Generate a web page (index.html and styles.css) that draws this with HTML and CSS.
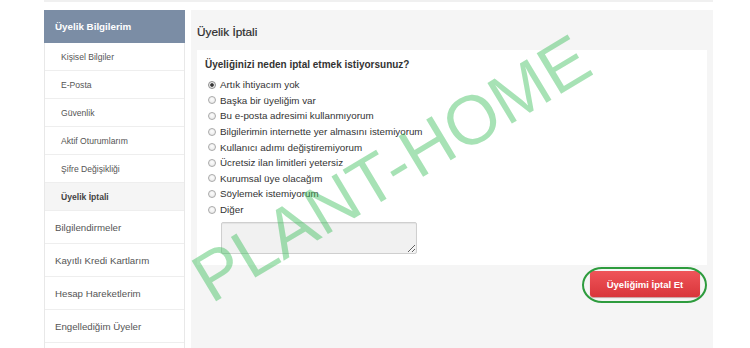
FILE: index.html
```html
<!DOCTYPE html>
<html lang="tr">
<head>
<meta charset="utf-8">
<title>Üyelik İptali</title>
<link rel="stylesheet" href="styles.css">
</head>
<body>
<div class="topline"></div>
<div class="layout">
  <nav class="sidebar">
    <div class="side-head">Üyelik Bilgilerim</div>
    <a class="sub">Kişisel Bilgiler</a>
    <a class="sub">E-Posta</a>
    <a class="sub">Güvenlik</a>
    <a class="sub">Aktif Oturumlarım</a>
    <a class="sub">Şifre Değişikliği</a>
    <a class="sub active">Üyelik İptali</a>
    <a class="main-item">Bilgilendirmeler</a>
    <a class="main-item">Kayıtlı Kredi Kartlarım</a>
    <a class="main-item">Hesap Hareketlerim</a>
    <a class="main-item">Engellediğim Üyeler</a>
    <a class="main-item"></a>
  </nav>
  <section class="panel">
    <h1 class="panel-title">Üyelik İptali</h1>
    <div class="card">
      <div class="question">Üyeliğinizi neden iptal etmek istiyorsunuz?</div>
      <div class="options">
        <label class="opt"><input type="radio" name="r" class="radio" checked><span>Artık ihtiyacım yok</span></label>
        <label class="opt"><input type="radio" name="r" class="radio"><span>Başka bir üyeliğim var</span></label>
        <label class="opt"><input type="radio" name="r" class="radio"><span>Bu e-posta adresimi kullanmıyorum</span></label>
        <label class="opt"><input type="radio" name="r" class="radio"><span>Bilgilerimin internette yer almasını istemiyorum</span></label>
        <label class="opt"><input type="radio" name="r" class="radio"><span>Kullanıcı adımı değiştiremiyorum</span></label>
        <label class="opt"><input type="radio" name="r" class="radio"><span>Ücretsiz ilan limitleri yetersiz</span></label>
        <label class="opt"><input type="radio" name="r" class="radio"><span>Kurumsal üye olacağım</span></label>
        <label class="opt"><input type="radio" name="r" class="radio"><span>Söylemek istemiyorum</span></label>
        <label class="opt"><input type="radio" name="r" class="radio"><span>Diğer</span></label>
      </div>
      <textarea class="note"></textarea>
    </div>
    <div class="actions">
      <div class="btn-wrap">
        <button class="btn-cancel">Üyeliğimi İptal Et</button>
      </div>
    </div>
  </section>
</div>
<div class="watermark">PLANT-HOME</div>
</body>
</html>
```
FILE: styles.css
```css
* { box-sizing: border-box; }
html, body { margin: 0; padding: 0; }
body {
  background: #fff;
  font-family: "Liberation Sans", Arial, sans-serif;
  color: #555;
  width: 750px;
  height: 348px;
  overflow: hidden;
  position: relative;
}
.topline {
  height: 2px;
  margin: 0 37px 0 44px;
  background: #f0f0f0;
}
.layout {
  display: flex;
  gap: 6px;
  margin: 8px 37px 0 44px;
  height: 338px;
  overflow: hidden;
}
.sidebar {
  width: 141px;
  flex: none;
  display: flex;
  flex-direction: column;
  border-left: 1px solid #e8e8e8;
  border-right: 1px solid #e8e8e8;
}
.side-head {
  height: 33px;
  flex: none;
  background: #7b8da5;
  color: #fff;
  font-weight: bold;
  font-size: 9.8px;
  display: flex;
  align-items: center;
  margin: 0 -1px;
  padding-left: 11px;
}
.sub {
  height: 28px;
  flex: none;
  display: flex;
  align-items: center;
  padding-left: 16px;
  font-size: 8.6px;
  color: #555;
  border-bottom: 1px solid #eeeeee;
}
.sub.active {
  background: #f5f5f5;
  font-weight: bold;
  color: #444;
}
.main-item {
  height: 33px;
  flex: none;
  display: flex;
  align-items: center;
  padding-left: 10px;
  font-size: 9.7px;
  color: #555;
  border-bottom: 1px solid #eeeeee;
}
.panel {
  flex: 1;
  background: #f5f5f5;
}
.panel-title {
  margin: 0;
  padding: 14px 0 10px 6px;
  font-size: 11.8px;
  line-height: 16px;
  font-weight: normal;
  color: #2b2b2b;
  -webkit-text-stroke: 0.2px #2b2b2b;
}
.card {
  margin: 0 6px;
  background: #fff;
  padding: 8px 8px 11px 8px;
}
.question {
  font-weight: bold;
  font-size: 10px;
  line-height: 14px;
  color: #333;
}
.options {
  margin-top: 5px;
  display: flex;
  flex-direction: column;
}
.opt {
  height: 15.6px;
  display: flex;
  align-items: center;
  gap: 4px;
  padding-left: 3px;
  font-size: 9.8px;
  color: #333;
}
.radio {
  appearance: none;
  -webkit-appearance: none;
  margin: 0;
  width: 8px;
  height: 8px;
  border-radius: 50%;
  border: 1px solid #a9a9a9;
  background: radial-gradient(circle at 50% 40%, #fdfdfd 0, #e4e4e4 100%);
  flex: none;
}
.radio:checked {
  background: radial-gradient(circle, #2d2d2d 0, #3a3a3a 1.4px, #e6e6e6 2.2px, #f4f4f4 100%);
  border-color: #8e8e8e;
}
.note {
  display: block;
  margin: 5px 0 0 16px;
  width: 196px;
  height: 32px;
  background: #f1f1f1;
  border: 1px solid #cfcfcf;
  border-radius: 2px;
  box-shadow: inset 0 1px 1px rgba(0,0,0,0.06);
  resize: both;
  padding: 0;
}
.actions {
  display: flex;
  justify-content: flex-end;
  padding: 6px 13px 0 0;
}
.btn-wrap {
  position: relative;
}
.btn-wrap::after {
  content: "";
  position: absolute;
  top: -4px;
  bottom: -6px;
  left: -8px;
  right: -7px;
  border: 2px solid #2e9c3e;
  border-radius: 20px / 50%;
  pointer-events: none;
}
.btn-cancel {
  display: block;
  width: 110px;
  height: 26px;
  border: none;
  border-radius: 3px;
  background: linear-gradient(#ef5459, #d9363b);
  box-shadow: 0 1px 1px rgba(120,0,0,0.35);
  color: #fff;
  font-family: "Liberation Sans", Arial, sans-serif;
  font-weight: bold;
  font-size: 9.5px;
  padding: 0;
}
.watermark {
  position: absolute;
  left: 167px;
  top: 134px;
  font-family: "Liberation Sans", Arial, sans-serif;
  font-size: 69px;
  line-height: 69px;
  white-space: nowrap;
  color: rgba(60, 190, 90, 0.45);
  transform: rotate(-31deg);
  transform-origin: 50% 50%;
  pointer-events: none;
}
```
